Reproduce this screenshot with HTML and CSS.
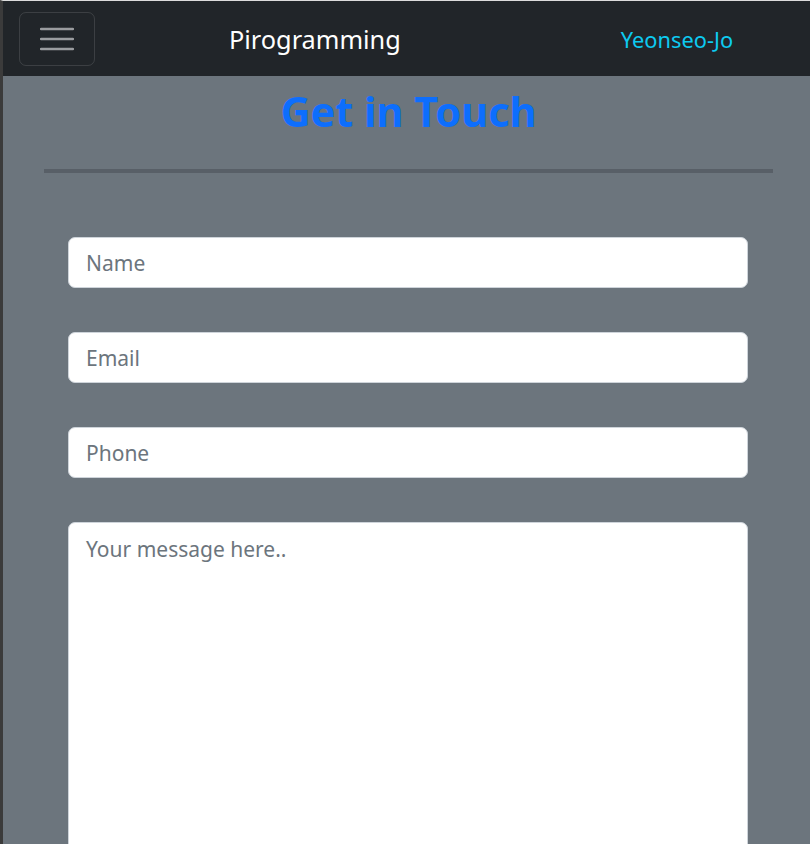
FILE: index.html
```html
<!DOCTYPE html>
<html lang="en">
<head>
<meta charset="utf-8">
<title>Get in Touch</title>
<link rel="stylesheet" href="styles.css">
</head>
<body>
<div class="frame">
  <nav class="navbar">
    <button class="toggler" type="button" aria-label="Toggle navigation">
      <svg width="34" height="24" viewBox="0 0 34 24" aria-hidden="true">
        <path d="M1 2H33M1 12H33M1 22H33" stroke="#9a9c9f" stroke-width="2.4" stroke-linecap="round" fill="none"/>
      </svg>
    </button>
    <a class="brand" href="#">Pirogramming</a>
    <a class="user" href="#">Yeonseo-Jo</a>
  </nav>
  <main class="content">
    <h1 class="title">Get in Touch</h1>
    <hr class="divider">
    <form class="form">
      <input class="field" type="text" placeholder="Name">
      <input class="field" type="email" placeholder="Email">
      <input class="field" type="tel" placeholder="Phone">
      <textarea class="field message" placeholder="Your message here.."></textarea>
    </form>
  </main>
</div>
</body>
</html>
```

FILE: styles.css
```css
html, body {
  margin: 0;
  padding: 0;
  height: 100%;
  overflow: hidden;
}
body {
  background: #6c757d;
  font-family: "Noto Sans", "Open Sans", sans-serif;
}
.frame {
  border-top: 1px solid #dcdcdc;
  border-left: 3px solid #3b3b3b;
  min-height: 100%;
  box-sizing: border-box;
}
.navbar {
  height: 75px;
  background: #212529;
  display: flex;
  align-items: center;
  padding: 0 0 0 16px;
  box-sizing: border-box;
}
.toggler {
  width: 76px;
  height: 54px;
  box-sizing: border-box;
  background: transparent;
  border: 1px solid rgba(255, 255, 255, 0.12);
  border-radius: 7px;
  display: flex;
  align-items: center;
  justify-content: center;
  padding: 0;
}
.brand {
  margin-left: 134px;
  color: #ffffff;
  text-decoration: none;
  font-size: 25.3px;
  line-height: 1;
  margin-top: 2px;
}
.user {
  margin-left: 220px;
  color: #0dcaf0;
  text-decoration: none;
  font-size: 21.8px;
  line-height: 1;
  margin-top: 2px;
}
.content {
  padding: 0 37px 0 41px;
}
.title {
  margin: 9px 0 0;
  text-align: center;
  color: #0d6efd;
  font-size: 41.5px;
  font-weight: 700;
  line-height: 52px;
}
.divider {
  margin: 32px 0 0;
  border: 0;
  height: 4px;
  background: #585f67;
}
.form {
  display: flex;
  flex-direction: column;
  gap: 44px;
  padding: 64px 25px 0 24px;
}
.field {
  display: block;
  width: 100%;
  height: 51px;
  box-sizing: border-box;
  border: 1px solid #ced4da;
  border-radius: 7px;
  background: #ffffff;
  padding: 0 17px;
  font-family: "Noto Sans", "Open Sans", sans-serif;
  font-size: 21px;
  color: #212529;
}
.field::placeholder {
  color: #6c757d;
  opacity: 1;
}
.message {
  height: 400px;
  padding-top: 12px;
  resize: none;
}
```
